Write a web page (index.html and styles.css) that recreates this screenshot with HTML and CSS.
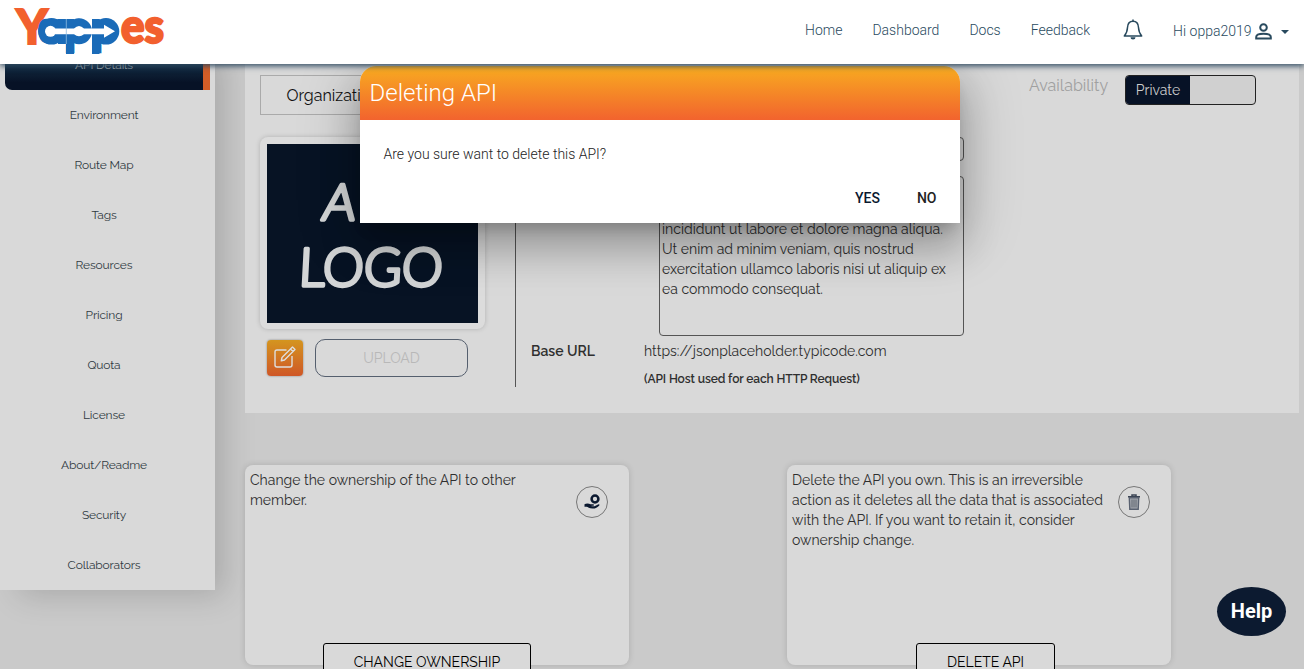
FILE: index.html
```html
<!DOCTYPE html>
<html lang="en">
<head>
<meta charset="utf-8">
<title>Yappes</title>
<link rel="stylesheet" href="styles.css">
</head>
<body>
<header class="topbar">
  <svg class="brand" width="170" height="64" viewBox="0 0 170 64">
    <g font-weight="900" font-family="Lato, sans-serif" fill="#f2602e" stroke="#f2602e">
      <text x="16" y="43.500" font-size="47" stroke-width="1.800" textLength="32" lengthAdjust="spacingAndGlyphs">Y</text>
      <text x="121" y="43" font-size="48" stroke-width="2.400" textLength="43" lengthAdjust="spacingAndGlyphs">es</text>
    </g>
    <g fill="#1a6bb8"><circle cx="51.500" cy="31.300" r="13.300"/><circle cx="79" cy="31.300" r="13"/><circle cx="106" cy="31.300" r="13.300"/><path d="M58 19H66V44H58zM66 19H74V54H66zM92 19H99.500V54H92z"/></g>
    <text transform="translate(38.500 43) skewX(12)" font-family="Open Sans, sans-serif" font-style="italic" font-weight="800" font-size="43" fill="#1a6bb8" textLength="81" lengthAdjust="spacingAndGlyphs">app</text>
    <circle cx="50.500" cy="31.300" r="5.500" fill="#fff"/>
    <path d="M52 28.500H74Q79 23.500 84 28.500H104V24.800L115 31.300 104 37.800V34.200H84Q79 38.500 74 34.200H52z" fill="#fff"/>
    <path d="M66.300 19V44" stroke="#8fbbe0" stroke-width=".8"/>
  </svg>
  <nav class="nav">
    <a>Home</a><a>Dashboard</a><a>Docs</a><a>Feedback</a>
  </nav>
  <svg class="bell" width="20" height="22" viewBox="0 0 20 22" fill="none" stroke="#294a5e" stroke-width="1.500"><path d="M10 2.200C5.800 2.200 4.600 5.500 4.500 8.500 4.300 13 3.500 14.500 1.300 16.900H18.700C16.500 14.500 15.700 13 15.500 8.500 15.400 5.500 14.200 2.200 10 2.200Z" stroke-linejoin="round"/><path d="M10 .4V2"/><path d="M7.500 18.200a2.500 2.300 0 0 0 5 0z" fill="#294a5e" stroke="none"/></svg>
  <div class="user"><span>Hi oppa2019</span>
    <svg width="17" height="17" viewBox="0 0 17 17" fill="none" stroke="#294a5e" stroke-width="2"><circle cx="8.500" cy="4.500" r="3.300"/><path d="M1.200 15.500V14C1.200 11.700 5 10.700 8.500 10.700S15.800 11.700 15.800 14v1.500z"/></svg>
    <i class="caret"></i>
  </div>
</header>

<div class="page">
  <aside class="side">
    <a class="side-item active">API Details</a>
    <a class="side-item">Environment</a>
    <a class="side-item">Route Map</a>
    <a class="side-item">Tags</a>
    <a class="side-item">Resources</a>
    <a class="side-item">Pricing</a>
    <a class="side-item">Quota</a>
    <a class="side-item">License</a>
    <a class="side-item">About/Readme</a>
    <a class="side-item">Security</a>
    <a class="side-item">Collaborators</a>
  </aside>
  <main class="content">
    <section class="panel">
      <div class="media">
        <div class="org">Organization</div>
        <div class="logo-card">
          <svg width="211" height="179" viewBox="0 0 211 179"><rect width="211" height="179" fill="#071324"/>
            <g fill="#d3d5d6" stroke="#d3d5d6" stroke-width="3.600" stroke-linejoin="round" font-family="Lato, sans-serif" font-weight="300" font-size="53">
              <text transform="translate(54 76) skewX(-8)" font-size="50" textLength="88">API</text>
              <text transform="translate(31 142) skewX(-3)" textLength="144" lengthAdjust="spacingAndGlyphs">LOGO</text>
            </g></svg>
        </div>
        <div class="media-actions">
          <span class="edit"><svg width="24" height="24" viewBox="0 0 24 24" fill="none" stroke="#dedede" stroke-width="1.400" stroke-linejoin="round"><path d="M13.500 5H4Q2 5 2 7V20Q2 22 4 22H17Q19 22 19 20V11"/><path d="M9 12.500 19.500 2 22 4.500 11.500 15 8.300 15.800zM17.500 4 20 6.500"/></svg></span>
          <span class="upload">UPLOAD</span>
        </div>
      </div>
      <div class="details">
        <div class="field"></div>
        <div class="area"><span>incididunt ut labore et dolore magna aliqua.</span><span>Ut enim ad minim veniam, quis nostrud</span><span>exercitation ullamco laboris nisi ut aliquip ex</span><span>ea commodo consequat.</span></div>
        <div class="base"><b>Base URL</b><span>https://jsonplaceholder.typicode.com</span></div>
        <div class="hint">(API Host used for each HTTP Request)</div>
      </div>
      <div class="avail"><label>Availability</label><div class="toggle"><span>Private</span></div></div>
    </section>
    <section class="cards">
      <article class="card">
        <p><span>Change the ownership of the API to other</span><span>member.</span></p>
        <span class="round"><svg width="18" height="18" viewBox="0 0 18 18"><circle cx="12" cy="6" r="3.400" fill="none" stroke="#0b1930" stroke-width="2.500"/><path d="M1.500 11.200C3 10.300 6 10.300 7.500 11.300H10.500Q11.500 12 10.500 12.700H8.500V13.300H11.500L15.500 11.300Q17 11.300 16.300 12.500C14.500 14.500 12 15.800 9.500 15.600 6 15.400 5 13.800 3.500 13.700H1.500z" fill="#0b1930"/></svg></span>
        <button class="wide">CHANGE OWNERSHIP</button>
      </article>
      <article class="card">
        <p><span>Delete the API you own. This is an irreversible</span><span>action as it deletes all the data that is associated</span><span>with the API. If you want to retain it, consider</span><span>ownership change.</span></p>
        <span class="round"><svg width="14" height="18" viewBox="0 0 14 18"><path d="M1 3.800H13M5 3.300V2H9V3.300" fill="none" stroke="#3b4454" stroke-width="1.500"/><path d="M2.300 4.800H11.700L11.200 16.300H2.800z" fill="#a4a8ae" stroke="#596170" stroke-width="1.400"/><path d="M5 6.500V14.500M7 6.500V14.500M9 6.500V14.500" stroke="#4b5361" stroke-width=".8"/></svg></span>
        <button class="narrow">DELETE API</button>
      </article>
    </section>
  </main>
</div>

<div class="modal">
  <h2>Deleting API</h2>
  <p>Are you sure want to delete this API?</p>
  <div class="modal-actions"><a class="yes">YES</a><a>NO</a></div>
</div>
<div class="help">Help</div>
</body>
</html>
```
FILE: styles.css
```css
*{box-sizing:border-box}
body{margin:0;width:1304px;height:669px;overflow:hidden;position:relative;background:#cacaca;font-family:Raleway,Lato,sans-serif;font-size:14px;color:#2f2f2f}
.topbar{position:relative;z-index:5;height:64px;background:#fff;box-shadow:0 2px 6px #2f4a60;display:flex;font-family:Roboto,sans-serif;font-weight:300;color:#294a5e}
.nav{display:flex;gap:30px;margin-left:635px;padding-top:22px;line-height:16px}
.bell{margin:19px 0 0 33px}
.user{display:flex;margin:22px 0 0 30px;line-height:18px}
.user svg{margin:1px 0 0 4px}
.caret{border:4px solid transparent;border-top-color:#294a5e;margin:8px 0 0 9px;height:4px}
.page{height:605px;display:flex;gap:30px;overflow:hidden}
.side{width:215px;height:550px;margin-top:-24px;background:#d9d9d9;box-shadow:14px 10px 30px -5px rgba(0,0,0,.17);flex:none;font-size:12px}
.side-item{display:block;height:50px;line-height:50px;text-align:center;padding-right:7px;color:#303a42;letter-spacing:-.15px}
.active{margin:0 5px;background:linear-gradient(#16334a 40%,#071226 85%);color:#a5adb2;border-right:7px solid #d25d27;border-radius:0 0 0 7px;padding:0}
.content{width:1054px}
.panel{height:349px;background:#d9d9d9;display:flex;padding-left:15px}
.media{width:256px;height:311px;margin-top:12px;border-right:1px solid #555}
.org{width:225px;height:40px;margin-top:-1px;border:1px solid #aaa;line-height:39px;padding-left:25.500px;font-size:16px;color:#111}
.logo-card{width:225px;height:192px;margin-top:22px;border-radius:8px;background:#dcdcdc;padding:7px;box-shadow:0 0 5px rgba(0,0,0,.18)}
.logo-card svg{display:block}
.media-actions{display:flex;gap:12px;margin:10px 0 0 7px}
.edit{width:36px;height:36px;margin-top:1px;border-radius:4px;background:linear-gradient(#d4951f,#cf5727);box-shadow:0 0 2px #777;padding:5px 6px}
.upload{width:153px;height:38px;border:1px solid #555f6e;border-radius:10px;text-align:center;line-height:36px;color:#b8b8b8}
.details{width:450px;padding-left:15px}
.field{width:305px;height:24px;border:1px solid #555;border-radius:4px;margin:73px 0 15px 128px}
.area{width:305px;height:160px;border:1px solid #555;border-radius:4px;margin-left:128px;padding:42px 2px 0;line-height:20px}
.area span,.card p span{display:block;white-space:nowrap}
.base{display:flex;line-height:20px;margin-top:5px}
.base b{width:113px;font-weight:600}
.hint{font-size:12px;font-weight:600;letter-spacing:-.1px;line-height:16px;margin:10px 0 0 113px}
.avail{display:flex;gap:17px;padding-top:11px;margin-left:63px;height:41px}
.avail label{width:79px;font-size:16px;line-height:21px;color:#a0a0a0;white-space:nowrap}
.toggle{width:131px;height:30px;border:1px solid #222;border-radius:4px;overflow:hidden;background:#d0d0d0}
.toggle span{display:block;width:64px;height:28px;line-height:28px;background:#071226;color:#ccc;text-align:center}
.cards{display:flex;gap:158px;margin-top:52px}
.card{position:relative;width:384px;height:200px;border-radius:8px;background:#d9d9d9;box-shadow:0 0 6px rgba(0,0,0,.15);padding:5px;display:flex;justify-content:space-between}
.card p{margin:0;line-height:20px}
.round{width:32px;height:32px;border:1px solid #777;border-radius:50%;margin:16px 16px 0 0;display:flex;align-items:center;justify-content:center}
.card button{position:absolute;top:178px;height:38px;border:1px solid #000;border-radius:3px;background:#d9d9d9;font:14px Raleway,Lato,sans-serif;color:#000;padding:0;white-space:nowrap}
.wide{left:78px;width:208px}
.narrow{left:129px;width:139px}
.modal{position:absolute;z-index:3;left:360px;top:66px;width:600px;height:157px;border-radius:16px 16px 0 0;background:#fff;box-shadow:0 11px 15px -7px rgba(0,0,0,.2),0 24px 38px 3px rgba(0,0,0,.2),0 9px 60px 8px rgba(0,0,0,.16);font-family:Roboto,sans-serif}
.modal h2{margin:0;height:54px;border-radius:16px 16px 0 0;background:linear-gradient(#f8ac20,#f2632e);color:#fff;font-size:24px;font-weight:300;line-height:55px;padding-left:9.500px}
.modal p{margin:25px 0 0 23.500px;font-weight:300;line-height:18px;color:#222}
.modal-actions{display:flex;justify-content:flex-end;gap:37px;padding-right:23.500px;margin-top:27px;font-weight:500;line-height:16px;color:#222}
.yes{color:#0b1930}
.help{position:absolute;z-index:4;left:1217px;top:587px;width:69px;height:49px;border-radius:50%;background:#0c1a30;color:#fff;font:bold 20px/48px Roboto,sans-serif;text-align:center}
```
